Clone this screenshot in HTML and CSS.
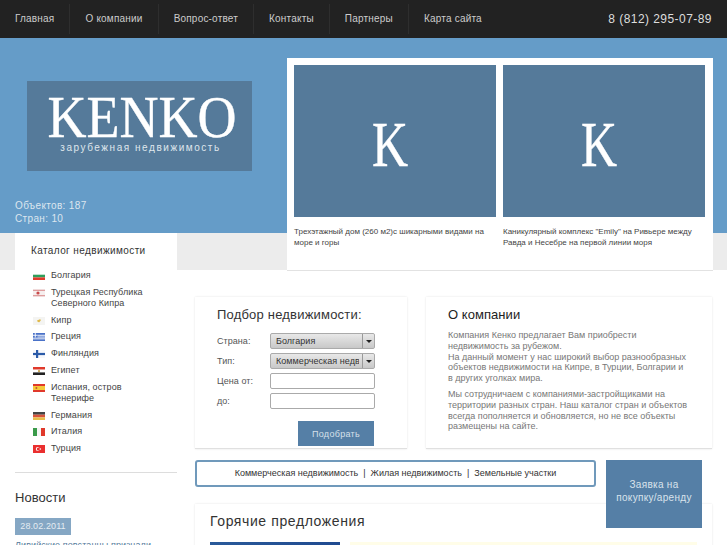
FILE: index.html
```html
<!DOCTYPE html>
<html lang="ru">
<head>
    <meta charset="UTF-8">
    <title>KENKO - зарубежная недвижимость</title>
    <link rel="stylesheet" href="styles.css">
</head>
<body>
    <header class="topbar">
        <nav class="nav">
            <a href="#">Главная</a>
            <a href="#">О компании</a>
            <a href="#">Вопрос-ответ</a>
            <a href="#">Контакты</a>
            <a href="#">Партнеры</a>
            <a href="#">Карта сайта</a>
        </nav>
        <div class="phone">8 (812) 295-07-89</div>
    </header>

    <section class="hero">
        <div class="logo">
            <div class="logo-name">KENKO</div>
            <div class="logo-sub">зарубежная недвижимость</div>
        </div>
        <div class="stats">Объектов: 187<br>Стран: 10</div>
        <div class="slider">
            <div class="slide">
                <div class="slide-pic"><span>K</span></div>
                <p>Трехэтажный дом (260 м2)с шикарными видами на море и горы</p>
            </div>
            <div class="slide">
                <div class="slide-pic"><span>K</span></div>
                <p>Каникулярный комплекс "Emily" на Ривьере между Равда и Несебре на первой линии моря</p>
            </div>
        </div>
    </section>
    <div class="strip"></div>

    <div class="content">
        <aside class="sidebar">
            <div class="catalog">
                <h3>Каталог недвижимости</h3>
                <ul class="countries">
                    <li><svg class="flag" viewBox="0 0 12 8"><rect width="12" height="8" fill="#fff"/><rect y="2.7" width="12" height="2.7" fill="#2f9e5b"/><rect y="5.4" width="12" height="2.6" fill="#e0392b"/></svg>Болгария</li>
                    <li><svg class="flag" viewBox="0 0 12 8"><rect width="12" height="8" fill="#f6eeee"/><rect y=".8" width="12" height="1" fill="#d98a8a"/><rect y="6.2" width="12" height="1" fill="#d98a8a"/><circle cx="5" cy="4" r="1.6" fill="#c94a4a"/></svg>Турецкая Республика Северного Кипра</li>
                    <li><svg class="flag" viewBox="0 0 12 8"><rect width="12" height="8" fill="#f4f4f2"/><path d="M4 3.5l3-1.2 1 .6-1.6 2.4-1.6-.4z" fill="#e0b94a"/></svg>Кипр</li>
                    <li><svg class="flag" viewBox="0 0 12 8"><rect width="12" height="8" fill="#4a72c8"/><rect y="1.8" width="12" height=".9" fill="#fff"/><rect y="3.6" width="12" height=".9" fill="#fff"/><rect y="5.4" width="12" height=".9" fill="#fff"/><rect width="4.5" height="4.5" fill="#4a72c8"/><rect x="1.8" width=".9" height="4.5" fill="#fff"/><rect y="1.8" width="4.5" height=".9" fill="#fff"/></svg>Греция</li>
                    <li><svg class="flag" viewBox="0 0 12 8"><rect width="12" height="8" fill="#f5f7fb"/><rect x="3" width="2.2" height="8" fill="#2a5aa8"/><rect y="2.9" width="12" height="2.2" fill="#2a5aa8"/></svg>Финляндия</li>
                    <li><svg class="flag" viewBox="0 0 12 8"><rect width="12" height="2.7" fill="#e0392b"/><rect y="2.7" width="12" height="2.7" fill="#fff"/><rect y="5.4" width="12" height="2.6" fill="#222"/><rect x="5" y="3.2" width="2" height="1.7" fill="#c9a24a"/></svg>Египет</li>
                    <li><svg class="flag" viewBox="0 0 12 8"><rect width="12" height="8" fill="#e0392b"/><rect y="2" width="12" height="4" fill="#f5c93a"/><rect x="2.6" y="3" width="1.6" height="2" fill="#c9602b"/></svg>Испания, остров Тенерифе</li>
                    <li><svg class="flag" viewBox="0 0 12 8"><rect width="12" height="2.7" fill="#444"/><rect y="2.7" width="12" height="2.7" fill="#d9533b"/><rect y="5.4" width="12" height="2.6" fill="#e8bd4a"/></svg>Германия</li>
                    <li><svg class="flag" viewBox="0 0 12 8"><rect width="4" height="8" fill="#3a9a4a"/><rect x="4" width="4" height="8" fill="#f6f6f6"/><rect x="8" width="4" height="8" fill="#e0392b"/></svg>Италия</li>
                    <li><svg class="flag" viewBox="0 0 12 8"><rect width="12" height="8" fill="#ea2f2f"/><circle cx="4.7" cy="4" r="1.9" fill="#fff"/><circle cx="5.3" cy="4" r="1.5" fill="#ea2f2f"/><circle cx="7.4" cy="4" r=".7" fill="#fff"/></svg>Турция</li>
                </ul>
            </div>
            <div class="news">
                <h2>Новости</h2>
                <span class="news-date">28.02.2011</span>
                <a class="news-link" href="#">Ливийские повстанцы признали</a>
            </div>
        </aside>

        <main class="main">
            <div class="cards">
                <form class="card filter">
                    <h2>Подбор недвижимости:</h2>
                    <div class="filter-grid">
                        <label>Страна:</label>
                        <span class="select"><select><option>Болгария</option></select></span>
                        <label>Тип:</label>
                        <span class="select"><select><option>Коммерческая недвижимость</option></select></span>
                        <label>Цена от:</label>
                        <input type="text">
                        <label>до:</label>
                        <input type="text">
                    </div>
                    <button class="submit" type="button">Подобрать</button>
                </form>
                <div class="card about">
                    <h2>О компании</h2>
                    <p>Компания Кенко предлагает Вам приобрести недвижимость за рубежом.<br>На данный момент у нас широкий выбор разнообразных объектов недвижимости на Кипре, в Турции, Болгарии и в других уголках мира.</p>
                    <p>Мы сотрудничаем с компаниями-застройщиками на территории разных стран. Наш каталог стран и объектов всегда пополняется и обновляется, но не все объекты размещены на сайте.</p>
                </div>
            </div>
            <div class="types-row">
                <div class="types">
                    <a href="#">Коммерческая недвижимость</a> &nbsp;|&nbsp; <a href="#">Жилая недвижимость</a> &nbsp;|&nbsp; <a href="#">Земельные участки</a>
                </div>
                <a class="request" href="#">Заявка на покупку/аренду</a>
            </div>
            <div class="card hot">
                <h2>Горячие предложения</h2>
                <div class="hot-row">
                    <div class="hot-pic"></div>
                    <div class="hot-info"></div>
                </div>
            </div>
        </main>
    </div>
</body>
</html>
```

FILE: styles.css
```css
html, body {
    margin: 0;
    padding: 0;
    height: 545px;
    overflow: hidden;
}
body {
    background: #fff;
    color: #333;
    font-family: "Liberation Sans", Arial, sans-serif;
    font-size: 9px;
    letter-spacing: .1px;
}
h2, h3, p, ul {
    margin: 0;
    padding: 0;
    font-weight: normal;
}
a {
    color: inherit;
    text-decoration: none;
}

/* top */
.topbar {
    height: 38px;
    background: #222;
    display: flex;
    justify-content: space-between;
    align-items: center;
    padding-right: 15px;
}
.nav {
    display: flex;
    align-items: center;
    height: 32px;
}
.nav a {
    color: #ccc;
    font-size: 10px;
    letter-spacing: .2px;
    line-height: 30px;
    padding: 0 15px;
    border-right: 1px solid #2e2e2e;
}
.nav a:last-child {
    border-right: 0;
}
.phone {
    color: #ddd;
    font-size: 12px;
    letter-spacing: .45px;
}

/* hero */
.hero {
    position: relative;
    height: 195px;
    background: #659cc8;
    padding-left: 15px;
}
.logo {
    position: absolute;
    left: 27px;
    top: 43px;
    width: 225px;
    height: 90px;
    background: #557a9a;
    color: #fff;
    text-align: center;
}
.logo-name {
    font-family: "Liberation Serif", serif;
    font-size: 60px;
    line-height: 50px;
    letter-spacing: 0;
    padding-top: 11px;
    margin-left: 5px;
    transform: scaleX(.9);
    -webkit-text-stroke: .4px #fff;
}
.logo-sub {
    color: #dfe6ec;
    font-size: 10px;
    line-height: 12px;
    letter-spacing: 1.55px;
    margin-left: 2px;
}
.stats {
    position: absolute;
    left: 15px;
    top: 161px;
    color: #dce6ef;
    font-size: 10px;
    letter-spacing: .35px;
    line-height: 13px;
}
.slider {
    position: absolute;
    left: 287px;
    top: 20px;
    width: 412px;
    height: 205px;
    padding: 7px 7px 0;
    background: #fff;
    display: flex;
    gap: 7px;
    border-bottom: 1px solid #e2e2e2;
    z-index: 2;
}
.slide {
    width: 202px;
}
.slide-pic {
    height: 152px;
    background: #557a9a;
    color: #fff;
    font-family: "Liberation Serif", serif;
    font-size: 64px;
    line-height: 160px;
    text-align: center;
    letter-spacing: 0;
    padding-right: 9px;
}
.slide-pic span {
    display: inline-block;
    transform: scaleX(.78);
    -webkit-text-stroke: .4px #fff;
}
.slide p {
    margin-top: 10px;
    font-size: 8px;
    line-height: 10.5px;
    letter-spacing: 0;
    color: #444;
}
.strip {
    height: 37px;
    background: #ececec;
}

/* body of page */
.content {
    display: flex;
    gap: 18px;
    margin-top: -37px;
    padding-left: 15px;
    height: 312px;
    overflow: hidden;
}
.sidebar {
    width: 162px;
    flex: none;
}
.catalog {
    position: relative;
    background: #fff;
    border-bottom: 1px solid #ddd;
    padding: 11px 0 18px 16px;
    height: 210px;
}
.catalog h3 {
    font-size: 10px;
    line-height: 13px;
    color: #333;
    letter-spacing: .4px;
    margin-bottom: 13px;
}
.countries {
    list-style: none;
    color: #444;
}
.countries li {
    position: relative;
    padding-left: 20px;
    padding-right: 20px;
    line-height: 11px;
    margin-bottom: 5.8px;
}
.flag {
    position: absolute;
    left: 2px;
    top: 2px;
    width: 12px;
    height: 8px;
}
.news {
    padding-top: 16px;
}
.news h2 {
    font-size: 13px;
    line-height: 17px;
    letter-spacing: .05px;
    color: #333;
    margin-bottom: 12px;
}
.news-date {
    display: block;
    width: 56px;
    height: 17px;
    background: #85a7c4;
    color: #e4ecf2;
    font-size: 9px;
    line-height: 17px;
    text-align: center;
}
.news-link {
    display: block;
    margin-top: 5px;
    color: #557a9a;
    white-space: nowrap;
}

.main {
    width: 517px;
    padding-top: 64px;
}
.cards {
    display: flex;
    gap: 19px;
}
.card {
    background: #fff;
    border-bottom: 1px solid #e0e0e0;
    box-shadow: 0 0 2px #e4e4e4;
}
.card h2 {
    font-size: 13px;
    line-height: 17px;
}

/* filter */
.filter {
    width: 168px;
    height: 151px;
    padding: 0 22px;
    flex: none;
    position: relative;
}
.filter h2 {
    padding-top: 9px;
    margin-bottom: 10px;
    letter-spacing: .2px;
}
.filter-grid {
    display: grid;
    grid-template-columns: 53px 105px;
    grid-auto-rows: 16px;
    row-gap: 4px;
    align-items: center;
    width: 158px;
}
.filter-grid label {
    color: #555;
    font-size: 9px;
    letter-spacing: .05px;
}
.filter-grid input {
    width: 105px;
    height: 16px;
    box-sizing: border-box;
    border: 1px solid #aaa;
    border-radius: 2px;
    background: #fff;
    margin: 0;
    padding: 0;
}
.select {
    position: relative;
    display: block;
    width: 105px;
    height: 16px;
}
.select select {
    appearance: none;
    -webkit-appearance: none;
    width: 105px;
    height: 16px;
    box-sizing: border-box;
    border: 1px solid #aaa;
    border-radius: 2px;
    background: linear-gradient(#e8e8e8, #c8c8c8);
    color: #333;
    font-family: inherit;
    font-size: 9px;
    letter-spacing: .05px;
    padding: 0 15px 0 5px;
    margin: 0;
}
.select:after {
    content: "";
    position: absolute;
    right: 1px;
    top: 1px;
    width: 11px;
    height: 14px;
    border-left: 1px solid #999;
    border-radius: 0 2px 2px 0;
    background: linear-gradient(#e8e8e8, #c8c8c8);
}
.select:before {
    content: "";
    position: absolute;
    right: 3px;
    top: 7px;
    border-style: solid;
    border-width: 3px 3px 0;
    border-color: #222 transparent transparent;
    z-index: 1;
}
.submit {
    position: absolute;
    left: 103px;
    top: 124px;
    width: 76px;
    height: 25px;
    border: 0;
    background: #557fa6;
    color: #d5e0ea;
    font-family: inherit;
    font-size: 9px;
    letter-spacing: .3px;
}

/* about */
.about {
    width: 242px;
    height: 151px;
    padding: 0 22px;
    color: #777;
}
.about h2 {
    padding-top: 9px;
    margin-bottom: 7px;
    letter-spacing: .05px;
    color: #222;
}
.about p {
    font-size: 9px;
    line-height: 10.8px;
    margin-bottom: 5px;
    letter-spacing: 0;
}

/* links row */
.types-row {
    display: flex;
    gap: 10px;
    margin-top: 11px;
    position: relative;
    z-index: 2;
}
.types {
    width: 397px;
    height: 23px;
    border: 2px solid #7099bb;
    border-radius: 3px;
    background: #fff;
    color: #333;
    font-size: 9px;
    line-height: 23px;
    text-align: center;
    letter-spacing: 0;
}
.request {
    display: block;
    width: 96px;
    height: 68px;
    box-sizing: border-box;
    padding: 18px 8px 0;
    background: #557fa6;
    color: #d9e3ec;
    font-size: 10px;
    letter-spacing: .3px;
    line-height: 13px;
    text-align: center;
}
.hot {
    width: 487px;
    height: 80px;
    margin-top: -24px;
    padding: 9px 15px 0;
}
.hot h2 {
    font-size: 14px;
    line-height: 17px;
    letter-spacing: .6px;
    color: #333;
}
.hot-row {
    display: flex;
    gap: 10px;
    margin-top: 12px;
}
.hot-pic {
    width: 130px;
    height: 40px;
    background: linear-gradient(90deg, #2a5a9a, #1f4a90);
}
.hot-info {
    width: 347px;
    height: 40px;
    background: #fffde8;
}
```
